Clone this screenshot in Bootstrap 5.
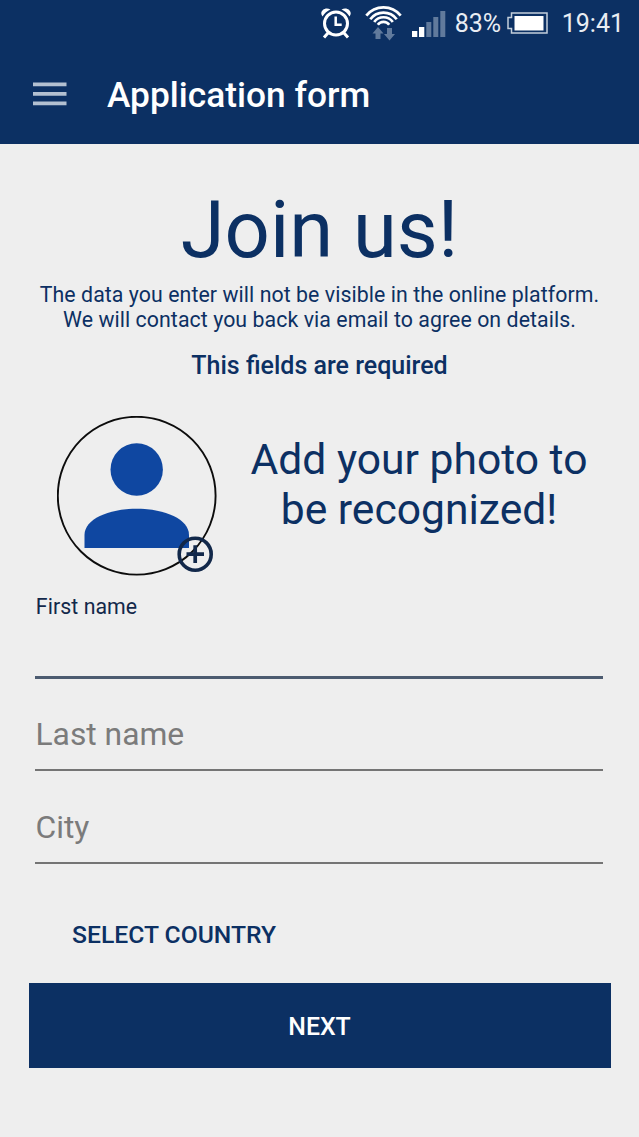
<!DOCTYPE html>
<html lang="en">
<head>
<meta charset="utf-8">
<meta name="viewport" content="width=device-width, initial-scale=1">
<title>Application form</title>
<link href="https://cdn.jsdelivr.net/npm/bootstrap@5.3.0/dist/css/bootstrap.min.css" rel="stylesheet">
<style>
  :root { --navy: #0c3063; --paper: #eeeeee; }
  body { font-family: Roboto, "Liberation Sans", sans-serif; background: var(--paper); color: var(--navy); min-height: 1137px; overflow-x: hidden; }
  svg { display: block; flex: none; }
  .app-header { background: var(--navy); height: 144px; color: #fff; }
  .status-row { height: 47px; padding-right: 15px; font-size: 25px; line-height: 47px; color: #e9edf3; }
  .icon-alarm { margin-right: 13px; }
  .icon-wifi { margin-right: 9px; }
  .icon-signal { margin-right: 9px; }
  .icon-battery { margin-right: 14px; }
  .battery-level { width: 47px; margin-right: 5px; }
  .title-bar { height: 97px; padding: 0 33px; }
  .menu-btn { width: 34px; height: 24px; margin-bottom: 4px; }
  .app-title { font-size: 35.3px; font-weight: 500; line-height: 97px; margin-left: 40px; }
  .headline { font-size: 79.5px; font-weight: 400; line-height: 94px; padding-top: 39px; }
  .intro { font-size: 21.3px; letter-spacing: .07px; line-height: 25px; padding-top: 5px; }
  .required-note { font-size: 25px; font-weight: 500; line-height: 30px; padding-top: 19px; }
  .photo-row { height: 160px; margin-top: 35px; padding-left: 57px; }
  .avatar { width: 160px; height: 160px; flex: none; }
  .plus-mark { left: 120px; top: 120px; }
  .photo-text { font-size: 42.6px; line-height: 50px; margin-left: 33px; margin-top: 18px; width: 338px; }
  .fields { padding: 18px 36px 0 35px; }
  .fields label { font-size: 21.3px; letter-spacing: .07px; line-height: 26px; color: #12284a; padding-left: .8px; }
  .line-input { font-size: 31.8px; line-height: 40px; height: 58px; border: 0; border-bottom: 2px solid #747474; border-radius: 0; padding: 0 0 14px .5px; background: transparent; }
  .line-input::placeholder { color: #7b7b7b; opacity: 1; }
  .line-input.active-line { height: 59px; border-bottom: 3px solid #4c5b70; }
  .last-line { margin-top: 34px; }
  .city-line { margin-top: 35px; }
  .btn-country { font-size: 24.7px; font-weight: 500; line-height: 30px; color: var(--navy); margin: 56px 0 0 37px; }
  .btn-next { width: 582px; height: 85px; margin: 33px 0 0 28.5px; padding: 2px 0 0; font-size: 24.85px; font-weight: 500; color: #fff; background: var(--navy); }
</style>
</head>
<body>
<header class="app-header">
  <div class="status-row d-flex justify-content-end align-items-center">
    <!-- alarm clock -->
    <svg class="icon-alarm" width="32" height="34" viewBox="0 0 32 34" fill="none" stroke="#fff">
      <circle cx="16" cy="16.500" r="11.500" stroke-width="3"/>
      <path d="M15.700 9.500v8.300h6" stroke-width="2.500"/>
      <path d="M8 26l-4 4.500M24 26l4 4.500" stroke-width="3"/>
      <path d="M2.500 9.500C-1.500 4.500 5 -1 10.500 2.500Q5.500 4.500 2.500 9.500zM29.500 9.500C33.500 4.500 27 -1 21.500 2.500Q26.500 4.500 29.500 9.500z" fill="#fff" stroke="none"/>
    </svg>
    <!-- wifi with traffic arrows -->
    <svg class="icon-wifi" width="38" height="37" viewBox="0 0 38 37" fill="none">
      <g stroke="#fff" stroke-width="2.700">
        <path d="M1.300 10.700A22 22 0 0 1 35.700 10.700"/>
        <path d="M5.300 14.200A16.500 16.500 0 0 1 31.700 14.200"/>
        <path d="M9.200 17A11.500 11.500 0 0 1 27.800 17"/>
        <path d="M12.800 19.800A7 7 0 0 1 24.200 19.800"/>
      </g>
      <path d="M13 22l5.500 6.500h-3V34h-5v-5.500h-3zM24.500 35.500L19 29h3v-6h5v6h3z" fill="#617a9c"/>
    </svg>
    <!-- signal bars -->
    <svg class="icon-signal" width="34" height="28" viewBox="0 0 34 28">
      <path d="M0 21h5.300v6H0zM7 17h5.300v10H7z" fill="#fff"/>
      <path d="M14.300 12h5v15h-5zM21.300 7h5v20h-5zM28.300 1h5v26h-5z" fill="#617a9c"/>
    </svg>
    <span class="battery-level">83%</span>
    <!-- battery -->
    <svg class="icon-battery" width="41" height="24" viewBox="0 0 41 24">
      <path d="M4.500 1h35.500v20H4.500v-4.500H1v-11h3.500z" fill="none" stroke="#c3cedb" stroke-width="1.500"/>
      <path d="M7.500 4h29v14.500h-29z" fill="#fff"/>
    </svg>
    <span>19:41</span>
  </div>
  <div class="title-bar d-flex align-items-center">
    <button class="menu-btn btn p-0 border-0 rounded-0" aria-label="Menu">
      <svg width="34" height="24" viewBox="0 0 34 24"><path d="M0 .5h33.500v3.700H0zM0 10h33.500v3.700H0zM0 19.500h33.500v3.700H0z" fill="#b3c0d1"/></svg>
    </button>
    <h1 class="app-title mb-0">Application form</h1>
  </div>
</header>

<main>
  <h2 class="headline text-center mb-0">Join us!</h2>
  <p class="intro text-center mb-0">The data you enter will not be visible in the online platform.<br>We will contact you back via email to agree on details.</p>
  <p class="required-note text-center mb-0">This fields are required</p>

  <section class="photo-row d-flex align-items-start">
    <div class="avatar position-relative">
      <svg width="160" height="160" viewBox="0 0 160 160">
        <circle cx="79.700" cy="79.700" r="78.900" fill="none" stroke="#0c0c0c" stroke-width="1.900"/>
        <circle cx="79.700" cy="53.500" r="26.200" fill="#0f47a1"/>
        <path d="M27.500 132v-13C27.500 103.500 51 92.800 79.700 92.800S132 103.500 132 119v13z" fill="#0f47a1"/>
      </svg>
      <svg class="plus-mark position-absolute" width="36" height="36" viewBox="0 0 36 36" fill="none" stroke="#12284a">
        <circle cx="18.200" cy="18.200" r="16" stroke-width="3.600"/>
        <path d="M9.500 18.200h17.500M18.200 9.300v17.800" stroke-width="3.700"/>
      </svg>
    </div>
    <div class="photo-text text-center text-nowrap">Add your photo to<br>be recognized!</div>
  </section>

  <form>
    <div class="fields">
      <label class="d-block" for="first">First name</label>
      <input class="form-control shadow-none line-input active-line" id="first" type="text">
      <input class="form-control shadow-none line-input last-line" id="last" type="text" placeholder="Last name" aria-label="Last name">
      <input class="form-control shadow-none line-input city-line" id="city" type="text" placeholder="City" aria-label="City">
      <button type="button" class="btn-country btn p-0 border-0 d-block">SELECT COUNTRY</button>
    </div>
    <button type="button" class="btn-next btn d-block border-0 rounded-0">NEXT</button>
  </form>
</main>
<script src="https://cdn.jsdelivr.net/npm/bootstrap@5.3.0/dist/js/bootstrap.bundle.min.js"></script>
</body>
</html>
